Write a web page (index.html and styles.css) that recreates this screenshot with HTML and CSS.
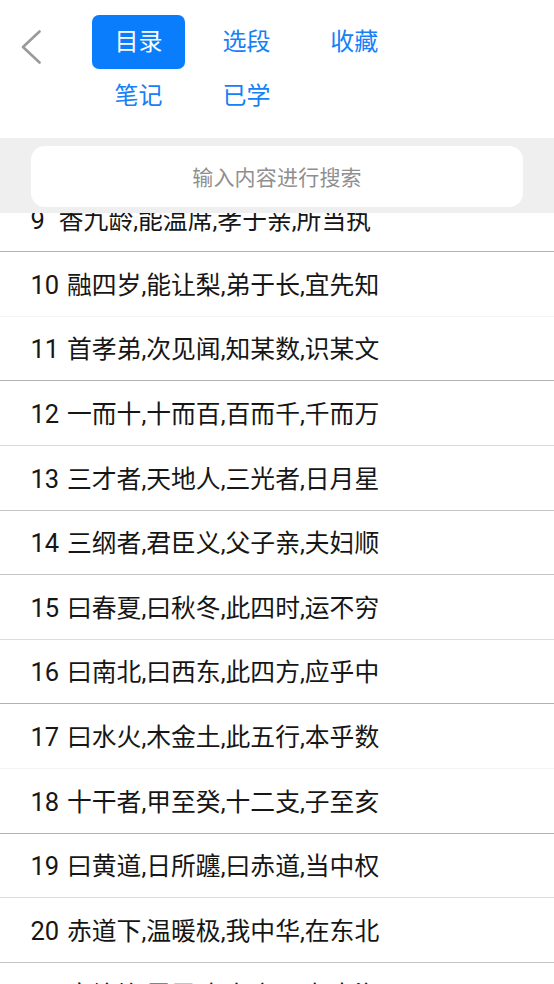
FILE: index.html
```html
<!DOCTYPE html>
<html lang="zh-CN">
<head>
<meta charset="utf-8">
<title>目录</title>
<link rel="stylesheet" href="styles.css">
</head>
<body>
<div class="page">
  <header class="top">
    <div class="nav">
      <div class="back">
        <svg width="20" height="34" viewBox="0 0 20 34" aria-hidden="true">
          <polyline points="18.5,1.5 2,17 18.5,32.5" fill="none" stroke="#9a9a9a" stroke-width="2.6" stroke-linecap="round" stroke-linejoin="round"/>
        </svg>
      </div>
      <nav class="tabs">
        <span class="tab active">目录</span>
        <span class="tab">选段</span>
        <span class="tab">收藏</span>
        <span class="tab">笔记</span>
        <span class="tab">已学</span>
      </nav>
    </div>
    <div class="search-band">
      <div class="search">输入内容进行搜索</div>
    </div>
  </header>
  <ul class="list">
    <li class="row line-dark"><span class="num one">9</span>香九龄,能温席,孝于亲,所当执</li>
    <li class="row line-faint"><span class="num">10</span>融四岁,能让梨,弟于长,宜先知</li>
    <li class="row line-dark"><span class="num">11</span>首孝弟,次见闻,知某数,识某文</li>
    <li class="row line-light"><span class="num">12</span>一而十,十而百,百而千,千而万</li>
    <li class="row line-mid"><span class="num">13</span>三才者,天地人,三光者,日月星</li>
    <li class="row line-mid"><span class="num">14</span>三纲者,君臣义,父子亲,夫妇顺</li>
    <li class="row line-light"><span class="num">15</span>曰春夏,曰秋冬,此四时,运不穷</li>
    <li class="row line-dark"><span class="num">16</span>曰南北,曰西东,此四方,应乎中</li>
    <li class="row line-faint"><span class="num">17</span>曰水火,木金土,此五行,本乎数</li>
    <li class="row line-dark"><span class="num">18</span>十干者,甲至癸,十二支,子至亥</li>
    <li class="row line-light"><span class="num">19</span>曰黄道,日所躔,曰赤道,当中权</li>
    <li class="row line-mid"><span class="num">20</span>赤道下,温暖极,我中华,在东北</li>
    <li class="row line-light"><span class="num">21</span>寒燠均,霜露改,右高原,左大海</li>
  </ul>
</div>
</body>
</html>
```

FILE: styles.css
```css
html, body {
  margin: 0;
  padding: 0;
  background: #ffffff;
}

body {
  font-family: Roboto, "Noto Sans CJK SC", sans-serif;
  color: #161616;
  width: 554px;
  height: 984px;
  overflow: hidden;
}

.page {
  display: flex;
  flex-direction: column;
}

.top {
  position: relative;
  z-index: 1;
  background: #ffffff;
}

.nav {
  display: flex;
  align-items: flex-start;
  height: 138px;
  box-sizing: border-box;
  padding-top: 15px;
}

.back {
  width: 85px;
  box-sizing: border-box;
  padding-left: 21px;
  padding-top: 14.5px;
  display: flex;
}

.tabs {
  display: grid;
  grid-template-columns: repeat(3, 107.8px);
  grid-auto-rows: 54px;
  margin-left: -0.3px;
}

.tab {
  display: flex;
  align-items: center;
  justify-content: center;
  font-size: 24px;
  color: #1580f7;
  justify-self: center;
  width: 92.5px;
  height: 54px;
  line-height: 1;
}

.tab.active {
  background: #0a7dfc;
  color: #ffffff;
  border-radius: 7px;
}

.search-band {
  background: #efefef;
  padding: 7.7px 31px 6.2px;
}

.search {
  height: 61.6px;
  background: #ffffff;
  border-radius: 14px;
  display: flex;
  align-items: center;
  justify-content: center;
  font-size: 21px;
  color: #8f8f8f;
  letter-spacing: 0.2px;
}

.list {
  list-style: none;
  margin: -25.8px 0 0;
  padding: 0;
}

.row {
  display: block;
  height: 64.6px;
  box-sizing: border-box;
  border-bottom: 1px solid #b3b3b3;
  line-height: 63.6px;
  padding: 1.5px 0 0 30.5px;
  font-size: 24.8px;
  white-space: nowrap;
  overflow: hidden;
}

.num {
  display: inline-block;
  width: 36.5px;
  font-size: 25.5px;
}

.num.one {
  width: 28.3px;
}

.line-dark { border-bottom-color: #b2b2b2; }
.line-mid { border-bottom-color: #c4c4c4; }
.line-light { border-bottom-color: #dcdcdc; }
.line-faint { border-bottom-color: #f4f4f4; }
```
